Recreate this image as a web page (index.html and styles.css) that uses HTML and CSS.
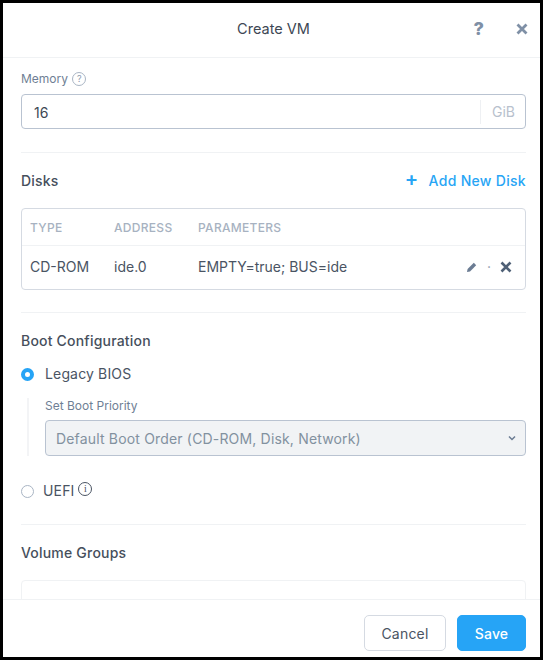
FILE: index.html
```html
<!DOCTYPE html>
<html>
<head>
  <title>Create VM</title>
  <link rel="stylesheet" href="styles.css">
</head>
<body>
  <div class="modal">
    <div class="modal-header">
      <span class="modal-title">Create VM</span>
      <span class="header-icon help">?</span>
      <svg class="header-icon close" width="12" height="12" viewBox="0 0 12 12"><path d="M1.500 1.500l9 9M10.500 1.500l-9 9" stroke="#7f90a6" stroke-width="2.800" fill="none"/></svg>
    </div>

    <div class="modal-body">
      <div class="field-label">Memory <span class="hint">?</span></div>
      <div class="input-box">
        <span class="input-value">16</span>
        <span class="input-unit">GiB</span>
      </div>

      <hr>

      <div class="section-head">
        <span class="section-title">Disks</span>
        <a class="add-link"><span class="plus">+</span>Add New Disk</a>
      </div>

      <table class="disk-table">
        <thead>
          <tr>
            <th class="col-type">TYPE</th>
            <th class="col-address">ADDRESS</th>
            <th>PARAMETERS</th>
            <th></th>
          </tr>
        </thead>
        <tbody>
          <tr>
            <td>CD-ROM</td>
            <td>ide.0</td>
            <td>EMPTY=true; BUS=ide</td>
            <td class="row-actions">
              <svg width="12" height="12" viewBox="0 0 12 12"><path d="M1 11l.6-3L7.800 1.800l2.400 2.400L4 10.400z" fill="#6b7c93"/></svg>
              <span class="dot">·</span>
              <svg width="12" height="12" viewBox="0 0 12 12"><path d="M1.500 1.500l9 9M10.500 1.500l-9 9" stroke="#4f6076" stroke-width="2.600" fill="none"/></svg>
            </td>
          </tr>
        </tbody>
      </table>

      <hr class="hr-tight">

      <div class="section-title boot-title">Boot Configuration</div>
      <div class="radio-row">
        <span class="radio checked"></span>
        <span class="radio-text">Legacy BIOS</span>
      </div>
      <div class="boot-priority">
        <div class="field-label small">Set Boot Priority</div>
        <div class="select-box">
          <span>Default Boot Order (CD-ROM, Disk, Network)</span>
          <svg width="8" height="6" viewBox="0 0 8 6"><path d="M1 1.500l3 3 3-3" stroke="#6b7c93" stroke-width="1.500" fill="none"/></svg>
        </div>
      </div>
      <div class="radio-row uefi">
        <span class="radio"></span>
        <span class="radio-text">UEFI</span>
        <span class="info">i</span>
      </div>

      <hr class="hr-volume">

      <div class="section-title volume-title">Volume Groups</div>
      <div class="volume-box"></div>
    </div>

    <div class="modal-footer">
      <button class="btn">Cancel</button>
      <button class="btn primary">Save</button>
    </div>
  </div>
</body>
</html>
```

FILE: styles.css
```css
* {
  box-sizing: border-box;
}

html, body {
  height: 100%;
}

body {
  margin: 0;
  font-family: Inter, Arial, sans-serif;
  font-size: 14px;
  color: #4a5463;
  background-color: #fff;
}

.modal {
  height: 660px;
  border: 3px solid #000;
  display: flex;
  flex-direction: column;
  background-color: #fff;
}

.modal-header {
  height: 55px;
  flex: none;
  display: flex;
  align-items: center;
  justify-content: center;
  padding: 0 0 3px 4px;
  border-bottom: 1px solid #f0f2f4;
  position: relative;
}

.modal-title {
  font-size: 14.500px;
  color: #3d4754;
}

.header-icon {
  position: absolute;
}

.help {
  right: 56px;
  top: 15px;
  font-size: 18px;
  font-weight: 800;
  color: #7f90a6;
}

.close {
  right: 12px;
  top: 20px;
}

.modal-body {
  flex: 1;
  overflow: hidden;
  padding: 13px 14px 0 18px;
}

.field-label {
  font-size: 12px;
  color: #6f7f95;
  line-height: 16px;
}

.hint {
  display: inline-block;
  width: 14px;
  height: 14px;
  border: 1px solid #a9b5c4;
  border-radius: 50%;
  font-size: 9px;
  line-height: 12px;
  text-align: center;
  color: #8d9bad;
  vertical-align: 1px;
  margin-left: 1px;
}

.input-box {
  height: 35px;
  margin-top: 7px;
  border: 1px solid #b9c3d1;
  border-radius: 4px;
  display: flex;
  align-items: center;
  padding: 1px 10px 0 12px;
}

.input-value {
  flex: 1;
  color: #3d4754;
}

.input-unit {
  border-left: 1px solid #eef0f3;
  padding-left: 11px;
  line-height: 24px;
  color: #b8c1cd;
}

hr {
  border: none;
  border-top: 1px solid #f0f2f4;
  margin: 23px 0 0;
}

.hr-tight {
  margin-top: 22px;
}

.section-title {
  font-size: 14px;
  font-weight: 500;
  color: #464f5c;
  letter-spacing: 0.2px;
}

.section-head {
  display: flex;
  justify-content: space-between;
  align-items: center;
  margin-top: 19px;
  line-height: 18px;
}

.add-link {
  color: #28a5f5;
  font-weight: 500;
  letter-spacing: 0.3px;
}

.plus {
  font-size: 20px;
  font-weight: 600;
  margin-right: 10px;
  line-height: 14px;
}

.disk-table {
  width: 100%;
  margin-top: 18px;
  border-collapse: separate;
  border-spacing: 0;
  border: 1px solid #d5dae2;
  border-radius: 4px;
}

.disk-table th {
  text-align: left;
  font-size: 12px;
  font-weight: 500;
  letter-spacing: 0.3px;
  color: #a7b2c1;
  height: 37px;
  border-bottom: 1px solid #f0f2f4;
  padding: 1px 0 0 8px;
}

.disk-table td {
  height: 43px;
  padding: 0 0 2px 8px;
  color: #4a5463;
}

.col-type {
  width: 84px;
}

.col-address {
  width: 84px;
}

.row-actions {
  width: 80px;
  text-align: right;
  padding-right: 13px !important;
}

.row-actions svg {
  vertical-align: -1px;
}

.dot {
  color: #8d9bad;
  margin: 0 5px;
}

.boot-title {
  margin-top: 19px;
}

.radio-row {
  display: flex;
  align-items: center;
  margin-top: 16px;
  line-height: 18px;
}

.radio {
  width: 13px;
  height: 13px;
  border: 1px solid #a9b5c4;
  border-radius: 50%;
  margin-right: 11px;
  flex: none;
}

.radio.checked {
  border: 4px solid #26a4f6;
}

.radio-text {
  letter-spacing: 0.15px;
}

.boot-priority {
  margin: 15px 0 0 6px;
  padding-left: 16px;
  border-left: 2px solid #f3f4f6;
}

.small {
  font-size: 12px;
}

.select-box {
  height: 36px;
  margin-top: 6px;
  background-color: #f1f3f5;
  border: 1px solid #b9c3d1;
  border-radius: 4px;
  display: flex;
  align-items: center;
  justify-content: space-between;
  padding: 0 9px 0 10px;
  color: #82919f;
  letter-spacing: 0.17px;
}

.uefi {
  margin-top: 26px;
}

.uefi .radio {
  margin-right: 9px;
}

.info {
  width: 14px;
  height: 14px;
  border: 1px solid #4a5463;
  border-radius: 50%;
  font-family: "Liberation Serif", serif;
  font-size: 10px;
  line-height: 12px;
  text-align: center;
  margin: -4px 0 0 4px;
}

.hr-volume {
  margin-top: 24px;
}

.volume-title {
  margin-top: 19px;
}

.volume-box {
  height: 60px;
  margin-top: 19px;
  border: 1px solid #f0f2f4;
  border-radius: 4px;
}

.modal-footer {
  height: 58px;
  flex: none;
  border-top: 1px solid #f0f2f4;
  display: flex;
  justify-content: flex-end;
  align-items: flex-start;
  gap: 11px;
  padding: 15px 14px 0 0;
  background-color: #fff;
}

.btn {
  height: 36px;
  width: 82px;
  border: 1px solid #d5dae2;
  border-radius: 5px;
  background-color: #fff;
  font-family: inherit;
  font-size: 14px;
  color: #4a5463;
  letter-spacing: 0.2px;
}

.primary {
  width: 69px;
  background-color: #26a4f6;
  border-color: #26a4f6;
  color: #fff;
  font-weight: 500;
}
```
